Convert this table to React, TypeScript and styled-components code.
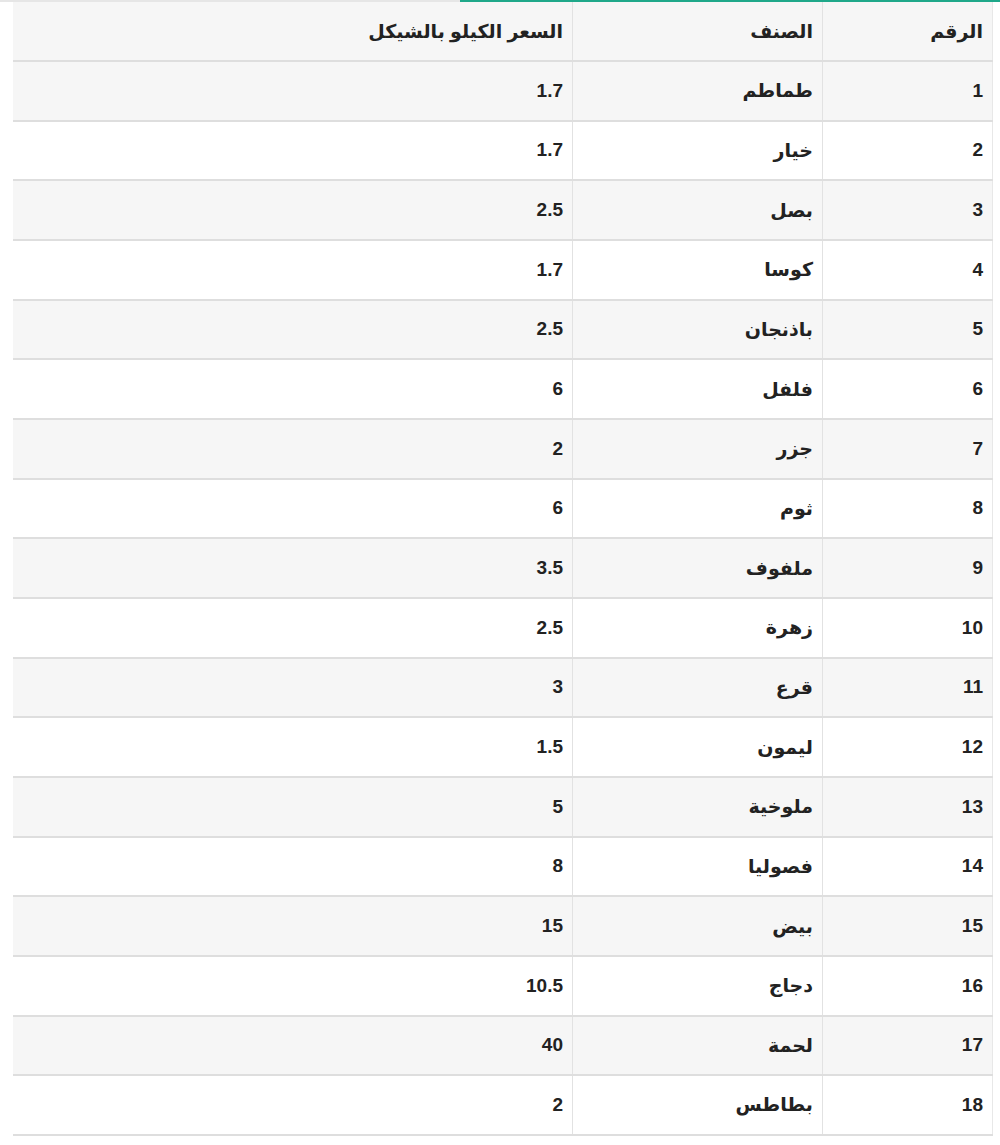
import styled, { createGlobalStyle } from 'styled-components'

const GlobalStyle = createGlobalStyle`
  html, body {
    margin: 0;
    padding: 0;
    background: #ffffff;
  }
  body {
    font-family: "Liberation Sans", "DejaVu Sans", Arial, sans-serif;
    color: #222222;
  }
`

type Item = { id: number; name: string; price: string }

const items: Item[] = [
  { id: 1, name: 'طماطم', price: '1.7' },
  { id: 2, name: 'خيار', price: '1.7' },
  { id: 3, name: 'بصل', price: '2.5' },
  { id: 4, name: 'كوسا', price: '1.7' },
  { id: 5, name: 'باذنجان', price: '2.5' },
  { id: 6, name: 'فلفل', price: '6' },
  { id: 7, name: 'جزر', price: '2' },
  { id: 8, name: 'ثوم', price: '6' },
  { id: 9, name: 'ملفوف', price: '3.5' },
  { id: 10, name: 'زهرة', price: '2.5' },
  { id: 11, name: 'قرع', price: '3' },
  { id: 12, name: 'ليمون', price: '1.5' },
  { id: 13, name: 'ملوخية', price: '5' },
  { id: 14, name: 'فصوليا', price: '8' },
  { id: 15, name: 'بيض', price: '15' },
  { id: 16, name: 'دجاج', price: '10.5' },
  { id: 17, name: 'لحمة', price: '40' },
  { id: 18, name: 'بطاطس', price: '2' },
]

const Page = styled.div`
  width: 1000px;
`

// thin strip above the table: grey on the left, active teal on the right
const TopStrip = styled.div`
  display: flex;
  height: 2px;
`

const StripPart = styled.div<{ $active?: boolean }>`
  height: 100%;
  background: ${(p) => (p.$active ? '#1fa88a' : '#e6e6e6')};
  flex: ${(p) => (p.$active ? '0 0 540px' : '1 1 auto')};
`

const TableWrap = styled.div`
  padding: 0 7px 0 13px;
`

const Table = styled.table`
  width: 980px;
  border-collapse: collapse;
  table-layout: fixed;
  direction: rtl;
`

const Row = styled.tr<{ $striped?: boolean }>`
  background: ${(p) => (p.$striped ? '#f6f6f6' : '#ffffff')};
  border-bottom: 2px solid #dedede;
`

const HeadCell = styled.th<{ $w?: number }>`
  width: ${(p) => (p.$w ? `${p.$w}px` : 'auto')};
  height: 59px;
  padding: 0 9px;
  text-align: right;
  vertical-align: middle;
  font-size: 19px;
  font-weight: 700;
  color: #222222;
  border-left: 1px solid #e2e2e2;
  border-right: 1px solid #e8e8e8;
  box-sizing: border-box;

  &:last-child {
    border-left: none;
  }
`

const Cell = styled.td`
  height: 59.67px;
  padding: 0 9px;
  text-align: right;
  vertical-align: middle;
  font-size: 19px;
  font-weight: 700;
  color: #222222;
  border-left: 1px solid #e2e2e2;
  border-right: 1px solid #e8e8e8;
  box-sizing: border-box;

  &:last-child {
    border-left: none;
  }
`

export default function App() {
  return (
    <Page>
      <GlobalStyle />
      <TopStrip>
        <StripPart />
        <StripPart $active />
      </TopStrip>
      <TableWrap>
        <Table>
          <thead>
            <Row $striped>
              <HeadCell $w={170}>الرقم</HeadCell>
              <HeadCell $w={250}>الصنف</HeadCell>
              <HeadCell>السعر الكيلو بالشيكل</HeadCell>
            </Row>
          </thead>
          <tbody>
            {items.map((it, i) => (
              <Row key={it.id} $striped={i % 2 === 0}>
                <Cell>{it.id}</Cell>
                <Cell>{it.name}</Cell>
                <Cell>{it.price}</Cell>
              </Row>
            ))}
          </tbody>
        </Table>
      </TableWrap>
    </Page>
  )
}
